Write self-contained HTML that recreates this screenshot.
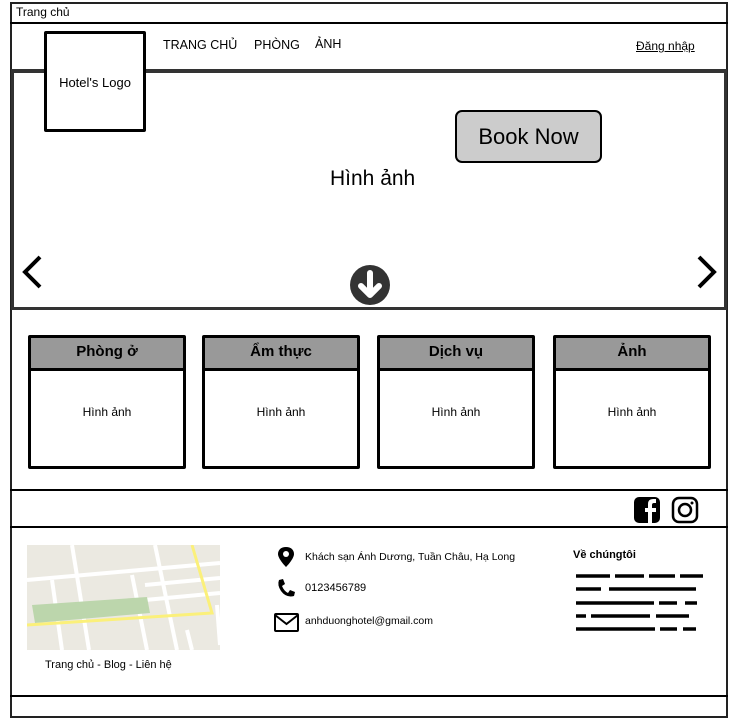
<!DOCTYPE html>
<html><head><meta charset="utf-8"><style>
body{margin:0;width:740px;height:720px;background:#fff;position:relative;overflow:hidden;font-family:"Liberation Sans","DejaVu Sans",sans-serif;color:#000}
.a{position:absolute;box-sizing:border-box}
.card{border:3px solid #000;border-radius:2px;background:#fff}
.card .h{height:30px;background:#999;border-bottom:3px solid #000;text-align:center;font-weight:bold;font-size:15px;line-height:28px;font-family:"Liberation Sans",sans-serif}
.card .b{text-align:center;font-size:12px;margin-top:34px}
.line{background:#000}
</style></head><body>
<div class="a" style="left:10px;top:2px;width:718px;height:716px;border:2px solid #222"></div>
<div class="a" style="left:16px;top:5px;font-size:12px">Trang chủ</div>
<div class="a line" style="left:10px;top:22px;width:718px;height:2px"></div>
<div class="a" style="left:163px;top:38px;font-size:12.5px">TRANG CHỦ</div>
<div class="a" style="left:254px;top:38px;font-size:12.5px">PHÒNG</div>
<div class="a" style="left:315px;top:37px;font-size:12.5px">ẢNH</div>
<div class="a" style="left:636px;top:39px;font-size:12px;text-decoration:underline">Đăng nhập</div>
<div class="a" style="left:11px;top:69px;width:716px;height:241px;border:3px solid #333;border-top-width:4px"></div>
<div class="a" style="left:44px;top:31px;width:102px;height:101px;border:3px solid #000;border-radius:2px;background:#fff;font-size:13px;padding-top:41px;text-align:center">Hotel's Logo</div>
<div class="a" style="left:455px;top:110px;width:147px;height:53px;border:2px solid #000;border-radius:7px;background:#ccc;font-size:22px;text-align:center;line-height:50px">Book Now</div>
<div class="a" style="left:330px;top:167px;font-size:21px">Hình ảnh</div>
<svg class="a" style="left:20px;top:254px" width="26" height="36"><path d="M20 3 L5 18 L20 33" stroke="#000" stroke-width="4" fill="none"/></svg>
<svg class="a" style="left:694px;top:254px" width="26" height="36"><path d="M5 3 L20 18 L5 33" stroke="#000" stroke-width="4" fill="none"/></svg>
<svg class="a" style="left:349px;top:264px" width="42" height="42"><circle cx="21" cy="21" r="20" fill="#333"/><path d="M21 9 V30 M12 22 L21 31 L30 22" stroke="#fff" stroke-width="6" fill="none" stroke-linecap="round" stroke-linejoin="round"/></svg>
<div class="a card" style="left:28px;top:335px;width:158px;height:134px"><div class="h">Phòng ở</div><div class="b">Hình ảnh</div></div>
<div class="a card" style="left:202px;top:335px;width:158px;height:134px"><div class="h">Ẩm thực</div><div class="b">Hình ảnh</div></div>
<div class="a card" style="left:377px;top:335px;width:158px;height:134px"><div class="h">Dịch vụ</div><div class="b">Hình ảnh</div></div>
<div class="a card" style="left:553px;top:335px;width:158px;height:134px"><div class="h">Ảnh</div><div class="b">Hình ảnh</div></div>
<div class="a line" style="left:10px;top:489px;width:718px;height:2px"></div>
<div class="a line" style="left:10px;top:526px;width:718px;height:2px"></div>
<svg class="a" style="left:633px;top:496px" width="28" height="28"><rect x="1" y="1" width="26" height="26" rx="5" fill="#000"/><path d="M19 28 V16 H23 V12 H19 V9 Q19 7 21 7 H23 V3 H20 Q15 3 15 8 V12 H12 V16 H15 V28" fill="#fff"/></svg>
<svg class="a" style="left:671px;top:496px" width="28" height="28"><rect x="2" y="2" width="24" height="24" rx="6" fill="none" stroke="#000" stroke-width="2.5"/><circle cx="14" cy="14" r="6" fill="none" stroke="#000" stroke-width="2.5"/><circle cx="21" cy="7" r="1.5" fill="#000"/></svg>
<svg class="a" style="left:27px;top:545px" width="193" height="105"><rect width="193" height="105" fill="#ebe9e1"/><g stroke="#fff" stroke-width="4" fill="none"><path d="M0 35 L193 18"/><path d="M118 40 L193 33"/><path d="M118 55 L193 48"/><path d="M45 0 L62 105"/><path d="M128 0 L150 105"/><path d="M25 35 L35 105"/><path d="M105 30 L120 105"/><path d="M160 85 L165 105"/><path d="M190 60 L193 100"/></g><path d="M5 60 L120 52 L123 68 L8 78 Z" fill="#bcd6ac"/><path d="M0 80 L185 68 L165 0" stroke="#fbf07a" stroke-width="3" fill="none"/></svg>
<div class="a" style="left:45px;top:659px;font-size:11px">Trang chủ - Blog - Liên hệ</div>
<svg class="a" style="left:277px;top:546px" width="18" height="22"><path d="M9 1 C4 1 1 4 1 8 C1 13 9 21 9 21 C9 21 17 13 17 8 C17 4 14 1 9 1Z" fill="#000"/><circle cx="9" cy="8" r="3" fill="#fff"/></svg>
<div class="a" style="left:305px;top:551px;font-size:10.5px">Khách sạn Ánh Dương, Tuần Châu, Hạ Long</div>
<svg class="a" style="left:276px;top:578px" width="20" height="20"><path d="M3 2 L7 1 L9 6 L6 8 Q8 13 12 15 L14 12 L19 14 L18 18 Q10 20 5 13 Q1 7 3 2Z" fill="#000"/></svg>
<div class="a" style="left:305px;top:582px;font-size:11px">0123456789</div>
<svg class="a" style="left:274px;top:613px" width="25" height="19"><rect x="1" y="1" width="23" height="17" rx="1" fill="none" stroke="#000" stroke-width="2"/><path d="M1 2 L12.5 11 L24 2" fill="none" stroke="#000" stroke-width="2"/></svg>
<div class="a" style="left:305px;top:615px;font-size:10.5px">anhduonghotel@gmail.com</div>
<div class="a" style="left:573px;top:549px;font-size:11px;font-weight:bold">Về chúngtôi</div>
<svg class="a" style="left:573px;top:570px" width="140" height="80"><g stroke="#000" stroke-width="3.5" fill="none"><path d="M3 6 H37 M42 6 H71 M76 6 H102 M107 6 H130"/><path d="M3 19 H28 M36 19 H123"/><path d="M3 33 H81 M86 33 H104 M112 33 H124"/><path d="M3 46 H13 M18 46 H77 M83 46 H116"/><path d="M3 59 H82 M87 59 H104 M110 59 H123"/></g></svg>
<div class="a line" style="left:10px;top:695px;width:718px;height:2px"></div>
</body></html>
